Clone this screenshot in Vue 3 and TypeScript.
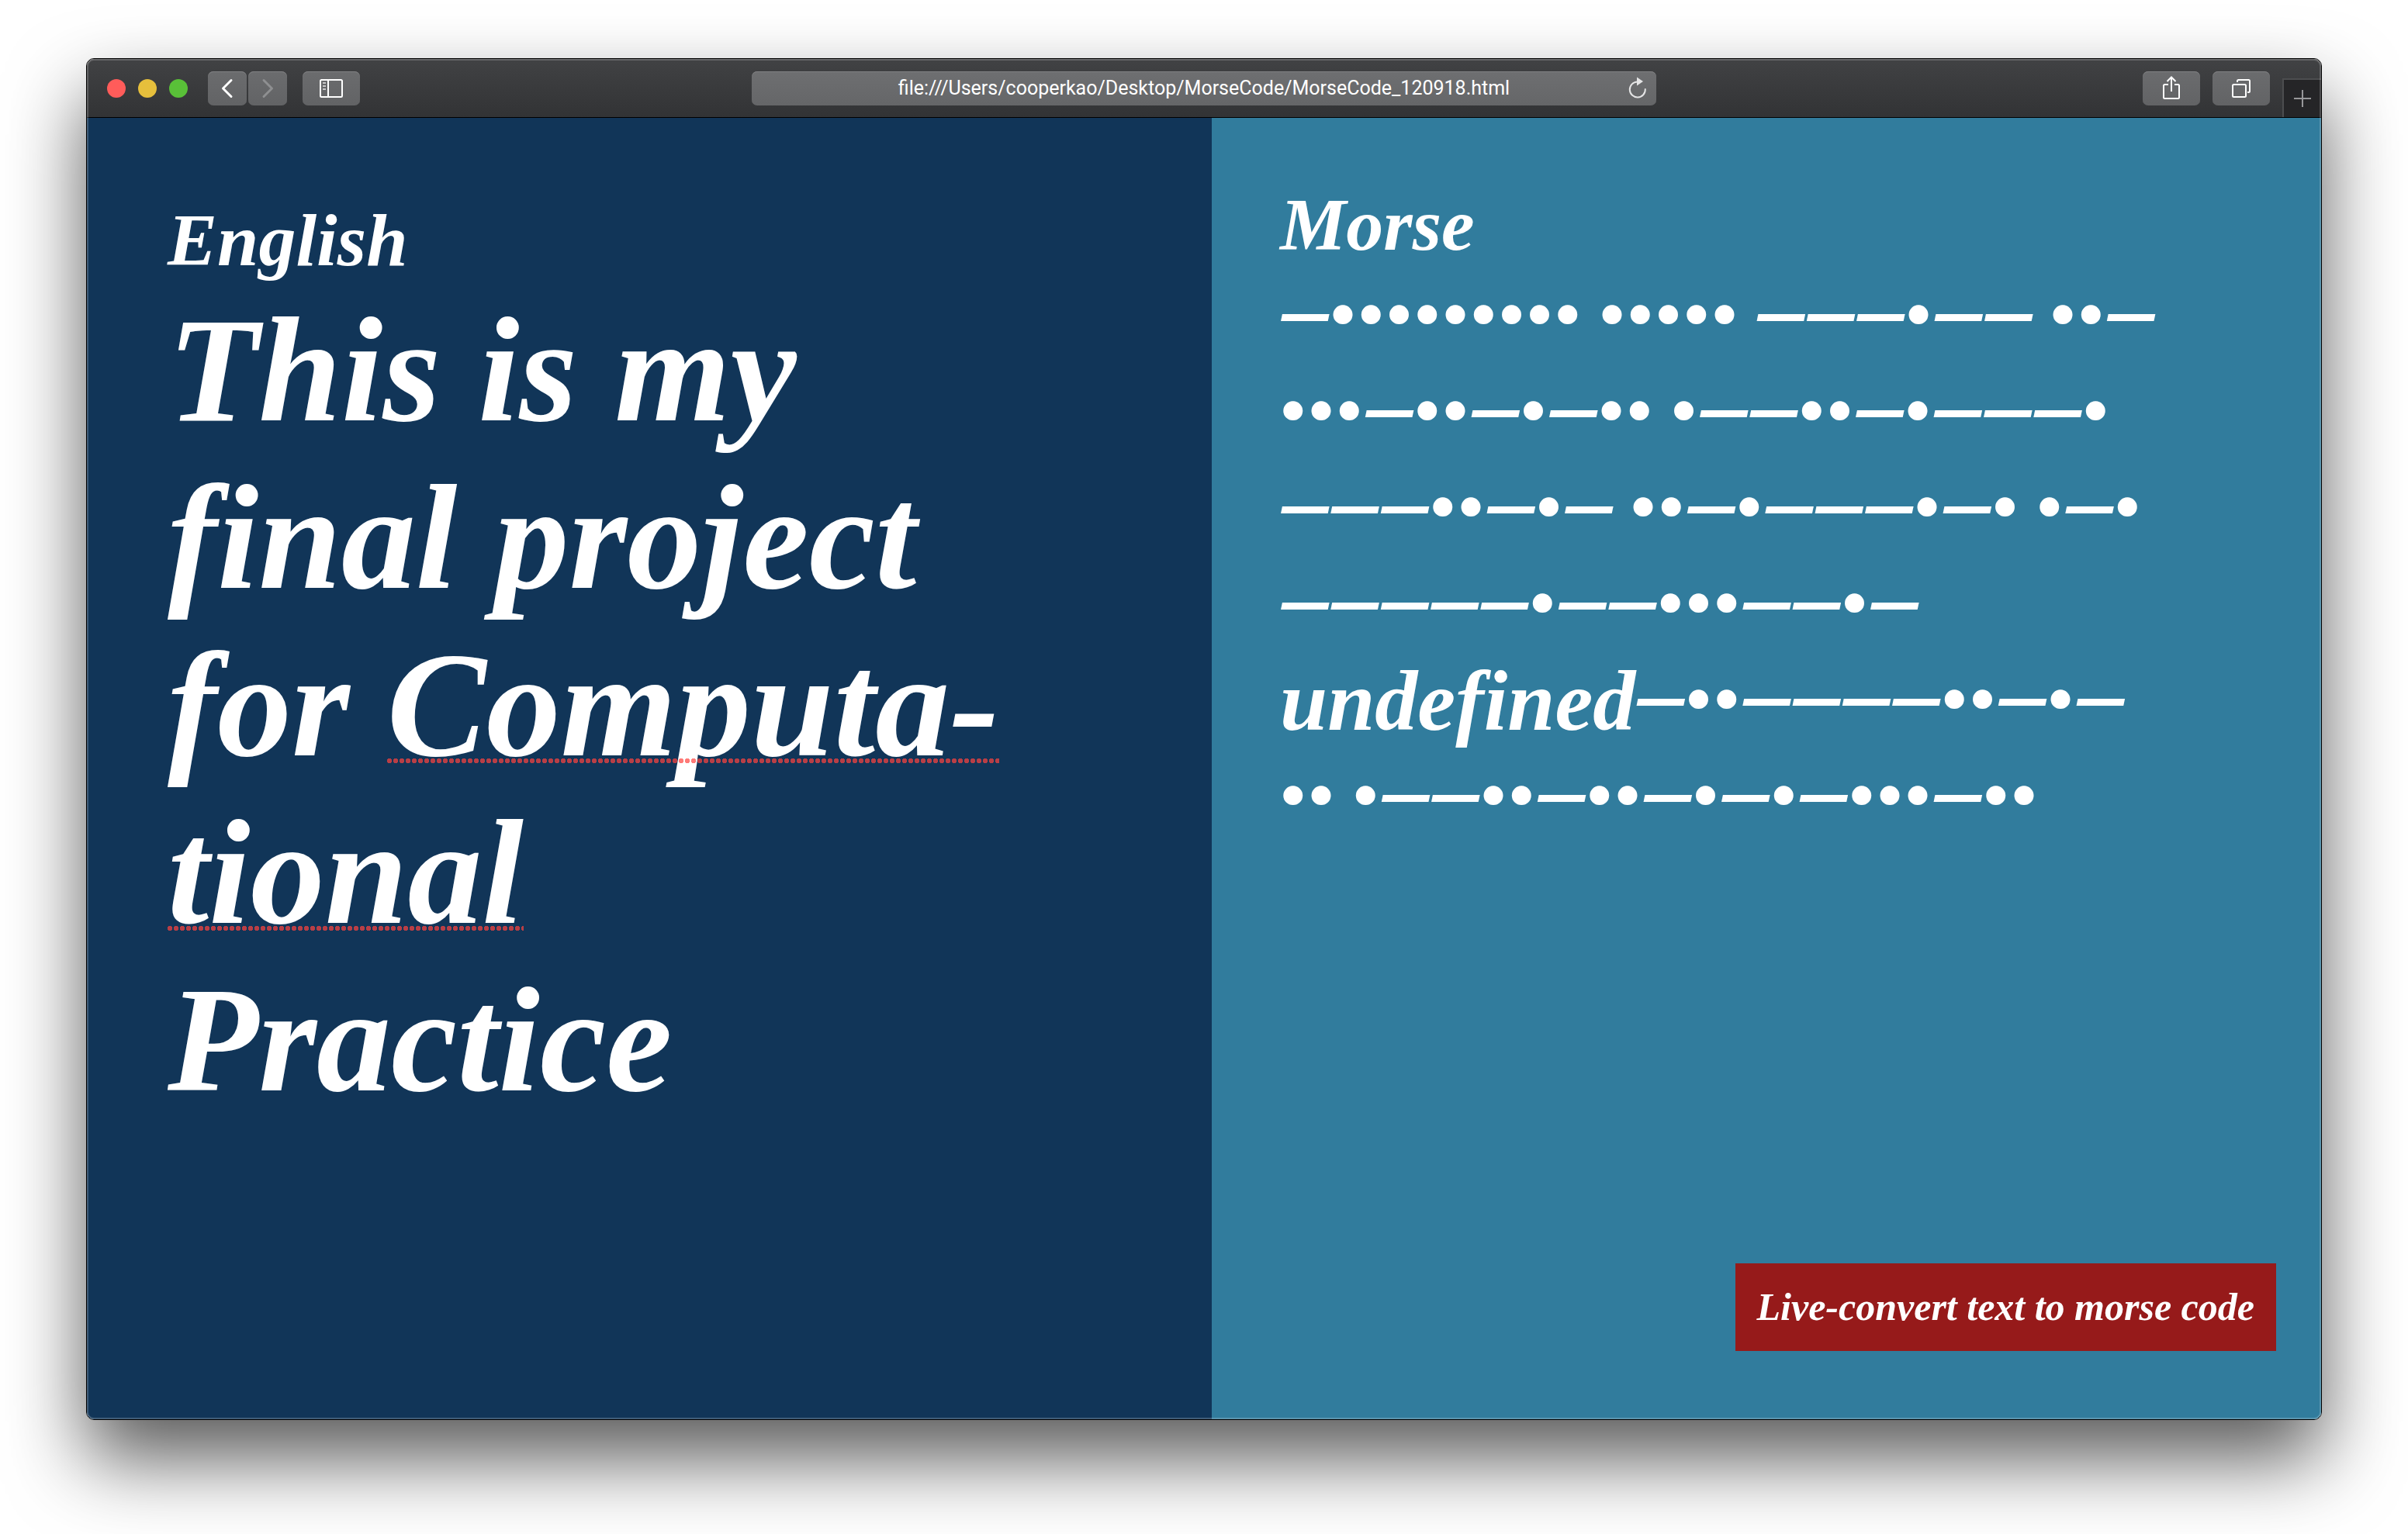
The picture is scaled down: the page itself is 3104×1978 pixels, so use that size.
<script setup lang="ts">
import { ref } from 'vue'

interface MorsePart {
  kind: 'dot' | 'dash' | 'gap' | 'word'
  value: string
}

const address = ref('file:///Users/cooperkao/Desktop/MorseCode/MorseCode_120918.html')

const morseLines: string[] = [
  '—••••••••• ••••• ———•—— ••—',
  '•••—••—•—•• •——••—•———•',
  '———••—•— ••—•———•—• •—•',
  '—————•——•••——•—',
  'undefined—••————••—•—',
  '•• •——••—••—•—•—•••—••',
]

function kindOf(value: string): MorsePart['kind'] {
  if (value[0] === '•') return 'dot'
  if (value[0] === '—') return 'dash'
  return value[0] === ' ' ? 'gap' : 'word'
}

// Runs of dots, dashes, spaces and plain characters each get their own type style.
function split(line: string): MorsePart[] {
  const runs = line.match(/•+|—+| +|[^•— ]+/g) ?? []
  return runs.map((value) => ({ kind: kindOf(value), value }))
}

const lines = morseLines.map(split)
</script>

<template>
  <div class="desktop">
    <div class="window">
      <header class="toolbar">
        <div class="group">
          <div class="lights">
            <button type="button" class="light close" aria-label="Close"></button>
            <button type="button" class="light minimise" aria-label="Minimise"></button>
            <button type="button" class="light zoom" aria-label="Zoom"></button>
          </div>
          <div class="history">
            <button type="button" class="tool narrow" aria-label="Back">
              <svg width="50" height="44" viewBox="0 0 50 44"><path d="M30 11.500 L19.500 22 L30 32.500" fill="none" stroke="#fff" stroke-width="3" stroke-linecap="round" stroke-linejoin="round" /></svg>
            </button>
            <button type="button" class="tool narrow" aria-label="Forward">
              <svg width="50" height="44" viewBox="0 0 50 44"><path d="M20 11.500 L30.500 22 L20 32.500" fill="none" stroke="#8e8f91" stroke-width="3" stroke-linecap="round" stroke-linejoin="round" /></svg>
            </button>
          </div>
          <button type="button" class="tool" aria-label="Show sidebar">
            <svg width="74" height="44" viewBox="0 0 74 44" fill="none" stroke="#fff" stroke-width="2">
              <rect x="23" y="11" width="28" height="22" rx="1.500" />
              <path d="M33 11V33" />
              <path d="M26 15H30M26 19H30M26 23H30" stroke="#c8c8c9" />
            </svg>
          </button>
        </div>

        <div class="address">
          <input v-model="address" type="text" aria-label="Address" spellcheck="false" />
          <button type="button" class="reload" aria-label="Reload">
            <svg width="24" height="28" viewBox="0 0 24 28">
              <path d="M11.500 6.500 A10 10 0 1 0 21.800 16" fill="none" stroke="#e4e4e5" stroke-width="2" stroke-linecap="round" />
              <path d="M11 0.500 L19 6 L11 11.500 Z" fill="#e4e4e5" />
            </svg>
          </button>
        </div>

        <div class="group end">
          <button type="button" class="tool" aria-label="Share">
            <svg width="74" height="44" viewBox="0 0 74 44" fill="none" stroke="#fff" stroke-width="2">
              <path d="M33 17H28.500Q27 17 27 18.500V33.500Q27 35 28.500 35H45.500Q47 35 47 33.500V18.500Q47 17 45.500 17H41" />
              <path d="M37 26V8" />
              <path d="M31.500 13L37 7.500L42.500 13" />
            </svg>
          </button>
          <button type="button" class="tool" aria-label="Show all tabs">
            <svg width="74" height="44" viewBox="0 0 74 44" fill="none" stroke="#fff" stroke-width="2">
              <rect x="26" y="17" width="17" height="16" rx="1.500" />
              <path d="M32 14V12.500Q32 11 33.500 11H46.500Q48 11 48 12.500V25.500Q48 27 46.500 27H45" />
            </svg>
          </button>
          <button type="button" class="new-tab" aria-label="New tab">
            <svg width="22" height="22" viewBox="0 0 22 22"><path d="M11 0V22M0 11H22" stroke="#98989a" stroke-width="2" /></svg>
          </button>
        </div>
      </header>

      <main class="panes">
        <section class="pane english">
          <h1 id="english-title">English</h1>
          <div
            class="editor"
            contenteditable="true"
            role="textbox"
            aria-multiline="true"
            aria-labelledby="english-title"
            spellcheck="false"
          >
            <div>This is my</div>
            <div>final project</div>
            <div>for <span class="misspelt">Computa-</span></div>
            <div><span class="misspelt">tional</span></div>
            <div>Practice</div>
          </div>
        </section>

        <section class="pane morse">
          <h1>Morse</h1>
          <div class="output">
            <div v-for="(line, i) in lines" :key="i" class="line"><span v-for="(part, j) in line" :key="j" :class="part.kind"><template v-if="part.kind === 'dot'"><span v-for="(sign, k) in part.value" :key="k" class="sign">{{ sign }}</span></template><template v-else>{{ part.value }}</template></span></div>
          </div>
          <button type="button" class="convert">Live-convert text to morse code</button>
        </section>
      </main>
    </div>
  </div>
</template>

<style>
body {
  margin: 0;
  background: #fff;
}
</style>

<style scoped>
.desktop {
  box-sizing: border-box;
  display: flex;
  min-height: 100vh;
  padding: 75px 111px 147px;
  overflow: hidden;
  background: #fff;
}

.window {
  position: relative;
  display: flex;
  flex: 1;
  flex-direction: column;
  min-width: 0;
  border: 1px solid #000;
  border-radius: 10px;
  overflow: hidden;
  box-shadow: 0 50px 100px rgba(0, 0, 0, 0.65);
}

.window::after {
  content: '';
  position: absolute;
  inset: 0;
  border: 2px solid rgba(255, 255, 255, 0.2);
  border-radius: 9px;
  pointer-events: none;
}

button {
  margin: 0;
  padding: 0;
  border: 0;
  color: inherit;
  font: inherit;
}

svg {
  display: block;
}

.toolbar {
  display: grid;
  grid-template-columns: 1fr 1166px 1fr;
  align-items: center;
  height: 75px;
  border-bottom: 1px solid #000;
  background: linear-gradient(#414244, #323335);
}

.group {
  display: flex;
  align-items: center;
  padding-left: 26px;
}

.group.end {
  gap: 16px;
  justify-content: flex-end;
  padding-left: 0;
}

.lights {
  display: flex;
  gap: 16px;
  margin-right: 26px;
}

.light {
  width: 24px;
  height: 24px;
  border-radius: 50%;
}

.close {
  background: #ff5c5a;
}

.minimise {
  background: #e6bf3c;
}

.zoom {
  background: #59c038;
}

.history {
  display: flex;
  gap: 2px;
  margin-right: 20px;
}

.tool {
  width: 74px;
  height: 44px;
  border-radius: 7px;
  background: linear-gradient(#6b6c6e, #626365);
  box-shadow: inset 0 1px #808183;
}

.tool.narrow {
  width: 50px;
}

.address {
  position: relative;
}

.address input {
  box-sizing: border-box;
  display: block;
  width: 100%;
  height: 44px;
  padding: 0 48px;
  border: 0;
  border-radius: 7px;
  background: linear-gradient(#6e6f71, #656668);
  box-shadow: inset 0 1px #808183;
  color: #fff;
  font: 400 25px/44px Roboto, sans-serif;
  text-align: center;
}

.reload {
  position: absolute;
  top: 7px;
  right: 12px;
  background: none;
}

.new-tab {
  box-sizing: border-box;
  display: flex;
  align-items: center;
  align-self: flex-end;
  justify-content: center;
  width: 50px;
  height: 50px;
  margin-top: 24px;
  border-top: 2px solid #4c4d4f;
  border-left: 2px solid #4c4d4f;
  background: #252527;
}

.panes {
  display: grid;
  flex: 1;
  grid-template-columns: 145fr 143fr;
  color: #fff;
  font-family: 'Liberation Serif', serif;
  font-style: italic;
  font-weight: 700;
}

.pane {
  box-sizing: border-box;
  display: flex;
  flex-direction: column;
  min-width: 0;
}

.english {
  padding: 102px 104px 88px;
  background: #113558;
}

.morse {
  padding: 82px 58px 88px 88px;
  background: #317c9d;
}

h1 {
  margin: 0;
  font-size: 96px;
  line-height: 112px;
}

.editor {
  margin-top: 4px;
  font-size: 192px;
  line-height: 216px;
  outline: none;
  white-space: nowrap;
}

.misspelt {
  position: relative;
}

.misspelt::after {
  content: '';
  position: absolute;
  right: 0;
  bottom: 32px;
  left: 0;
  height: 6px;
  background: radial-gradient(circle at 3px 3px, rgba(255, 66, 62, 0.7) 3px, transparent 3px) 0 0 / 8px 6px repeat-x;
}

.output {
  font-size: 110px;
  line-height: 124px;
  white-space: pre;
}

.line {
  height: 124px;
}

.dash {
  font: italic 900 67px/1 'Noto Sans', 'Open Sans', sans-serif;
  vertical-align: 17px;
}

.dot {
  font-size: 92px;
  line-height: 1;
  vertical-align: 9px;
}

.dot .sign {
  margin-right: 4px;
}

.gap {
  font-size: 84px;
}

.convert {
  align-self: flex-end;
  margin-top: auto;
  padding: 0 28px;
  background: #961a1a;
  font-size: 50px;
  line-height: 113px;
}
</style>
